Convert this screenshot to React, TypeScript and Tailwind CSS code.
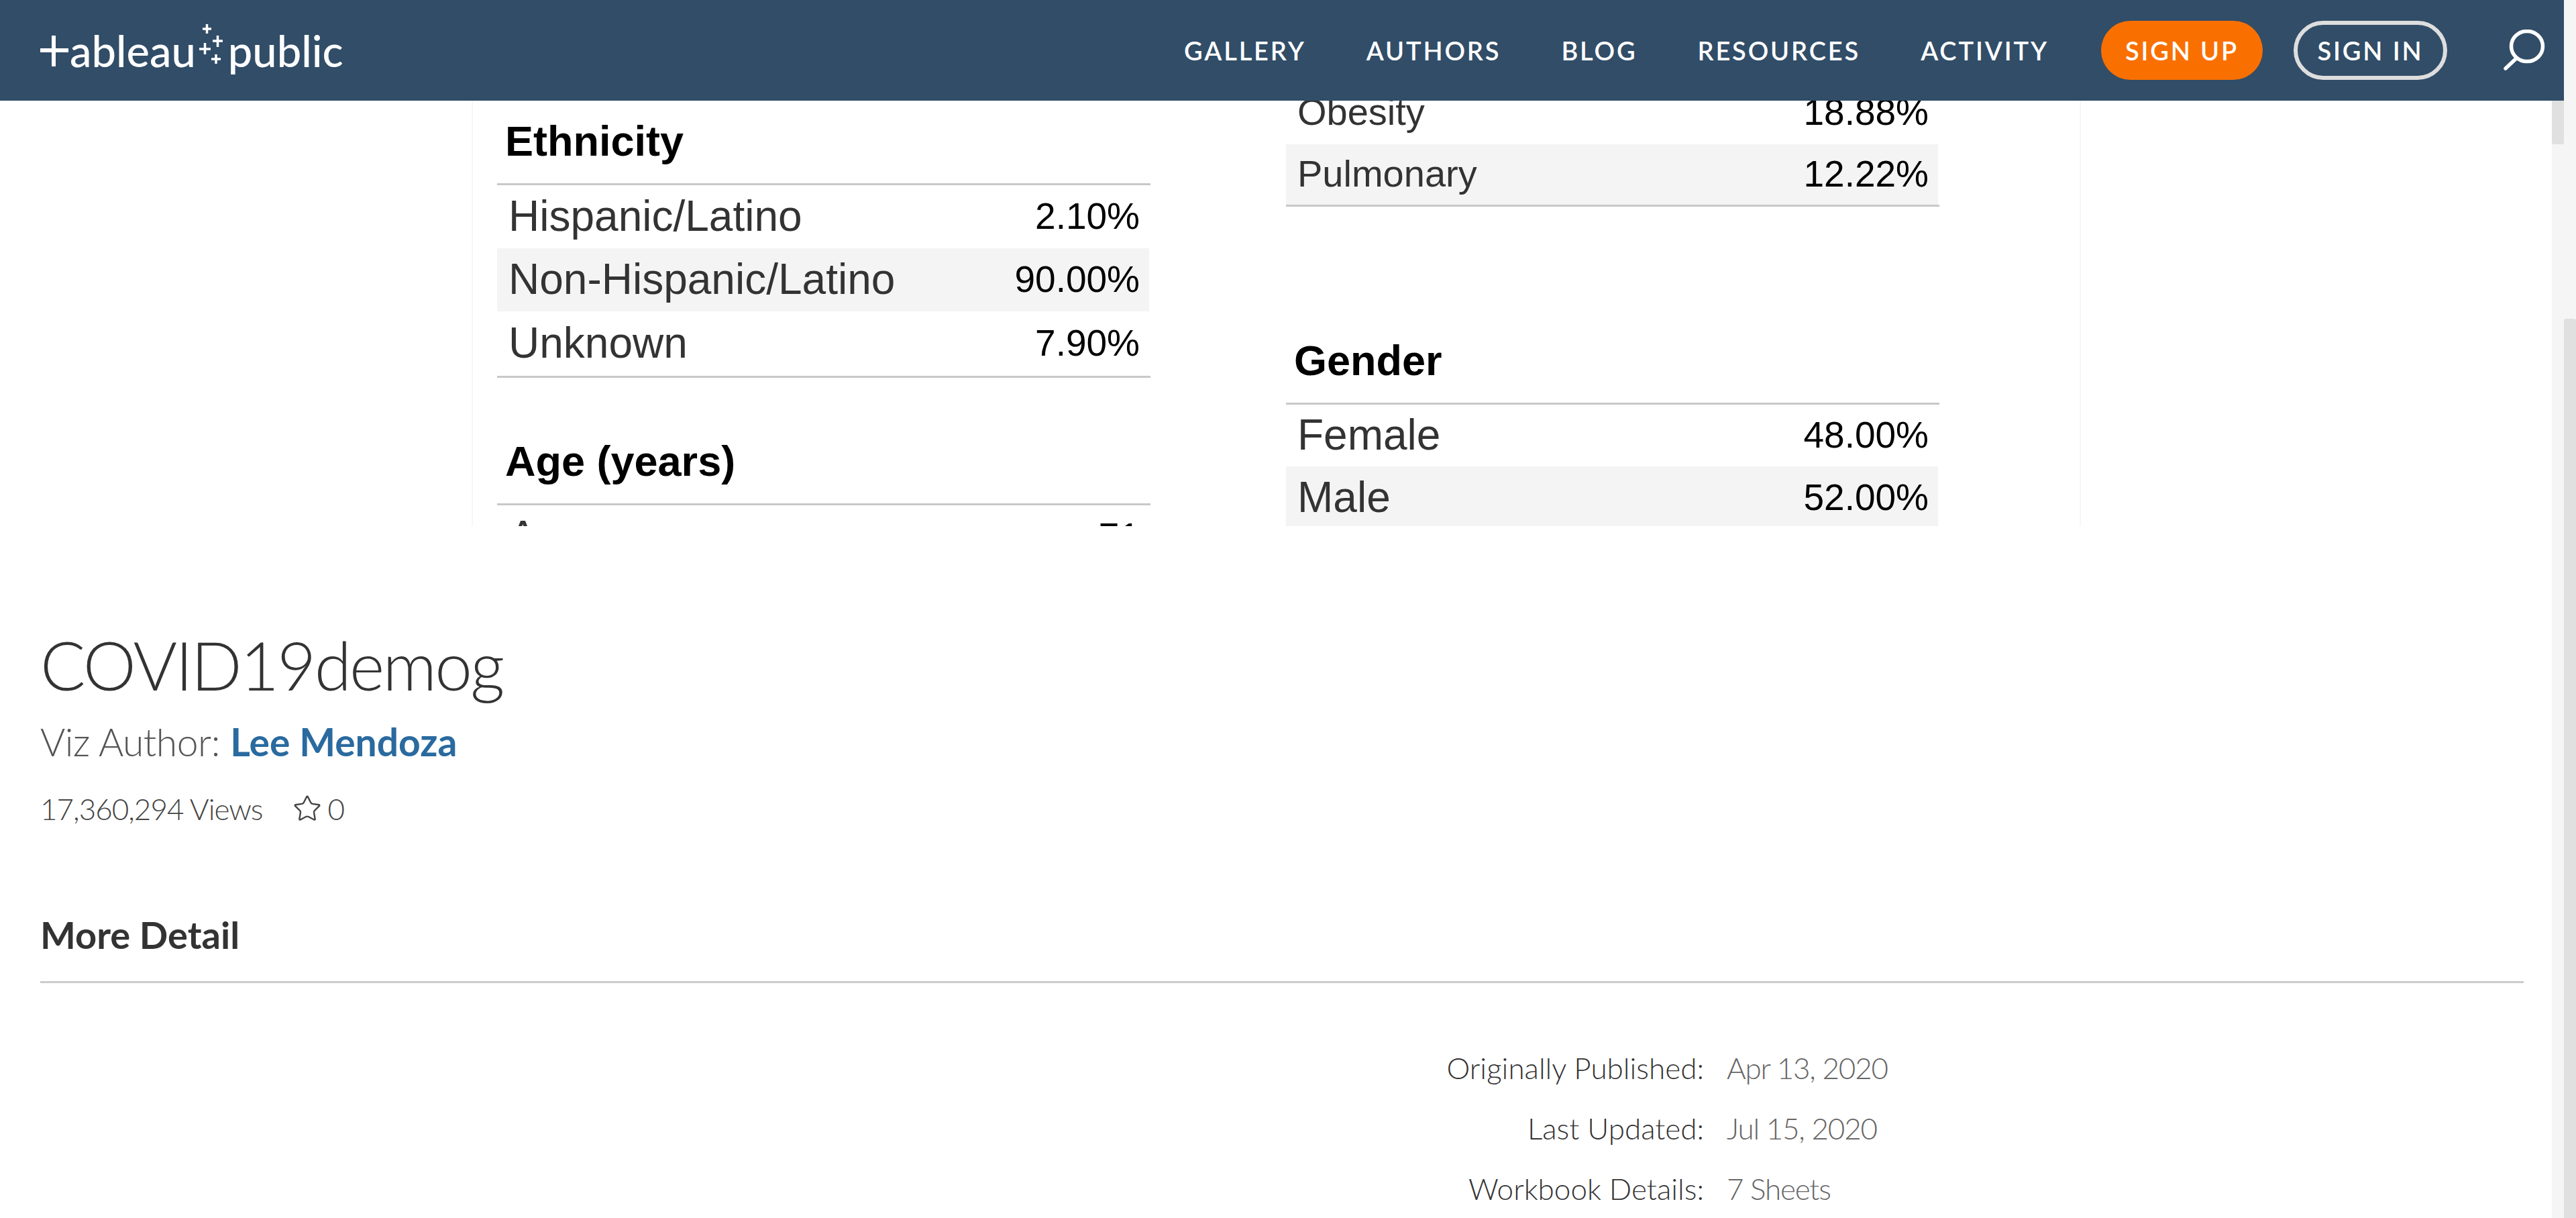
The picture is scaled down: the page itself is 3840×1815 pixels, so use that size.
import { Star } from 'lucide-react'

const NAV_ITEMS = ['GALLERY', 'AUTHORS', 'BLOG', 'RESOURCES', 'ACTIVITY']

function Row({ label, value, alt, height = 'h-[94px]', labelSize = 'text-[64px]' }: { label: string; value: string; alt?: boolean; height?: string; labelSize?: string }) {
  return (
    <div className={`flex w-[972px] items-center justify-between pb-[2px] pl-[17px] pr-[14px] ${height} ${alt ? 'bg-[#f4f4f4]' : ''}`}>
      <span className={`${labelSize} leading-none text-[#333333]`}>{label}</span>
      <span className="text-[55px] leading-none text-black">{value}</span>
    </div>
  )
}

function Heading({ children }: { children: string }) {
  return (
    <div className="h-[126px] border-b-[3px] border-[#c8c8c8] pl-[12px] pt-[22px] text-[63px] leading-[76px] font-bold text-black">
      {children}
    </div>
  )
}

function Logo() {
  return (
    <div className="flex h-[150px] w-[460px] items-center font-['Lato',sans-serif] text-white">
      <svg width="42" height="46" viewBox="0 0 42 46" className="mt-[1px] shrink-0" stroke="white" strokeWidth="6" fill="none">
        <path d="M0 22h42M20 0v46" />
      </svg>
      <span className="ml-[2px] text-[65px] leading-none font-medium">ableau</span>
      <svg width="44" height="66" viewBox="0 0 44 66" className="ml-[1px] mb-[12px] shrink-0" stroke="white" strokeWidth="3.5" fill="none">
        <path d="M9 7h13M15.500 0v14M24 25h15M31.500 17v17M4 37h17M12.500 28v17M22 52h14M29 45v14" />
      </svg>
      <span className="ml-[3px] text-[65px] leading-none font-medium">public</span>
    </div>
  )
}

function Header() {
  return (
    <header className="flex h-[150px] shrink-0 items-center bg-[#314d68] pl-[60px] font-['Lato',sans-serif]">
      <Logo />
      <nav className="ml-auto flex items-center text-[38px] font-semibold tracking-[0.075em] text-white">
        <div className="flex items-center gap-[90px]">
          {NAV_ITEMS.map((item) => (
            <a key={item}>{item}</a>
          ))}
        </div>
        <a className="ml-[78px] flex h-[88px] w-[241px] items-center justify-center rounded-full bg-[#f97000]">SIGN UP</a>
        <a className="ml-[46px] flex h-[88px] w-[229px] items-center justify-center rounded-full border-[6px] border-[#dedede]">SIGN IN</a>
        <svg width="62" height="62" viewBox="0 0 62 62" className="ml-[84px] mr-[28px]" stroke="white" strokeWidth="5.500" strokeLinecap="round" fill="none">
          <ellipse cx="35" cy="25" rx="23.500" ry="22.500" />
          <path d="M19 43 3 58" />
        </svg>
      </nav>
    </header>
  )
}

function VizPanel() {
  return (
    <div className="ml-[703px] flex h-[634px] w-[2399px] gap-[202px] overflow-hidden border-x-2 border-[#f6f6f6] pl-[36px] font-['Liberation_Sans',Arial,sans-serif]">
      {/* left column */}
      <div className="w-[974px]">
        <Heading>Ethnicity</Heading>
        <Row label="Hispanic/Latino" value="2.10%" />
        <Row label="Non-Hispanic/Latino" value="90.00%" alt />
        <div className="border-b-[3px] border-[#c8c8c8]">
          <Row label="Unknown" value="7.90%" height="h-[96px]" />
        </div>
        <div className="mt-[64px]">
          <Heading>Age (years)</Heading>
        </div>
        <Row label="Average" value="71" />
      </div>
      {/* right column */}
      <div className="-mt-[29px] w-[974px]">
        <Row label="Obesity" value="18.88%" labelSize="text-[56px]" />
        <div className="border-b-[3px] border-[#c8c8c8]">
          <Row label="Pulmonary" value="12.22%" alt height="h-[90px]" labelSize="text-[56px]" />
        </div>
        <div className="mt-[169px]">
          <Heading>Gender</Heading>
        </div>
        <Row label="Female" value="48.00%" height="h-[92px]" />
        <Row label="Male" value="52.00%" alt />
      </div>
    </div>
  )
}

function Details() {
  const rows = [
    ['Originally Published:', 'Apr 13, 2020'],
    ['Last Updated:', 'Jul 15, 2020'],
    ['Workbook Details:', '7 Sheets'],
  ]
  return (
    <div className="mt-[99px] grid grid-cols-[2480px_1fr] gap-x-[34px] gap-y-[36px] text-[44px] leading-[54px] font-light">
      {rows.map(([label, value]) => (
        <div key={label} className="contents">
          <span className="text-right text-[#333333]">{label}</span>
          <span className="tracking-[-1.2px] text-[#666666]">{value}</span>
        </div>
      ))}
    </div>
  )
}

export default function App() {
  return (
    <div className="flex h-[1815px] w-[3840px] overflow-hidden bg-white">
      <div className="flex min-w-0 flex-1 flex-col">
        <Header />
        <div className="flex min-h-0 flex-1">
          <main className="min-w-0 flex-1">
            <VizPanel />
            <div className="pl-[60px] pr-[42px] font-['Lato',sans-serif]">
              <h1 className="mt-[146px] text-[100px] leading-[120px] font-light tracking-[-2.7px] text-[#333333]">COVID19demog</h1>
              <p className="mt-[22px] text-[57px] leading-[66px] font-light text-[#555555]">
                <span className="tracking-[-0.5px]">Viz Author:</span> <a className="font-bold text-[#2a6a9f]">Lee Mendoza</a>
              </p>
              <div className="mt-[41px] flex h-[52px] items-center text-[44px] font-light text-[#444444]">
                <span className="tracking-[-1px]">17,360,294 Views</span>
                <Star className="ml-[44px] h-[44px] w-[44px]" strokeWidth={1.3} />
                <span className="ml-[9px]">0</span>
              </div>
              <h2 className="mt-[130px] border-b-[3px] border-[#cccccc] pb-[37px] text-[56px] leading-[64px] font-bold text-[#333333]">More Detail</h2>
              <Details />
            </div>
          </main>
          {/* inner scrollbar */}
          <div className="w-[18px] shrink-0 bg-[#f5f5f5]">
            <div className="h-[65px] rounded-b-[3px] bg-[#e0e0e0]" />
          </div>
        </div>
      </div>
      {/* page scrollbar */}
      <div className="flex w-[18px] shrink-0 flex-col justify-end bg-[#f5f5f5]">
        <div className="h-[1340px] rounded-t-[3px] bg-[#e0e0e0]" />
      </div>
    </div>
  )
}
